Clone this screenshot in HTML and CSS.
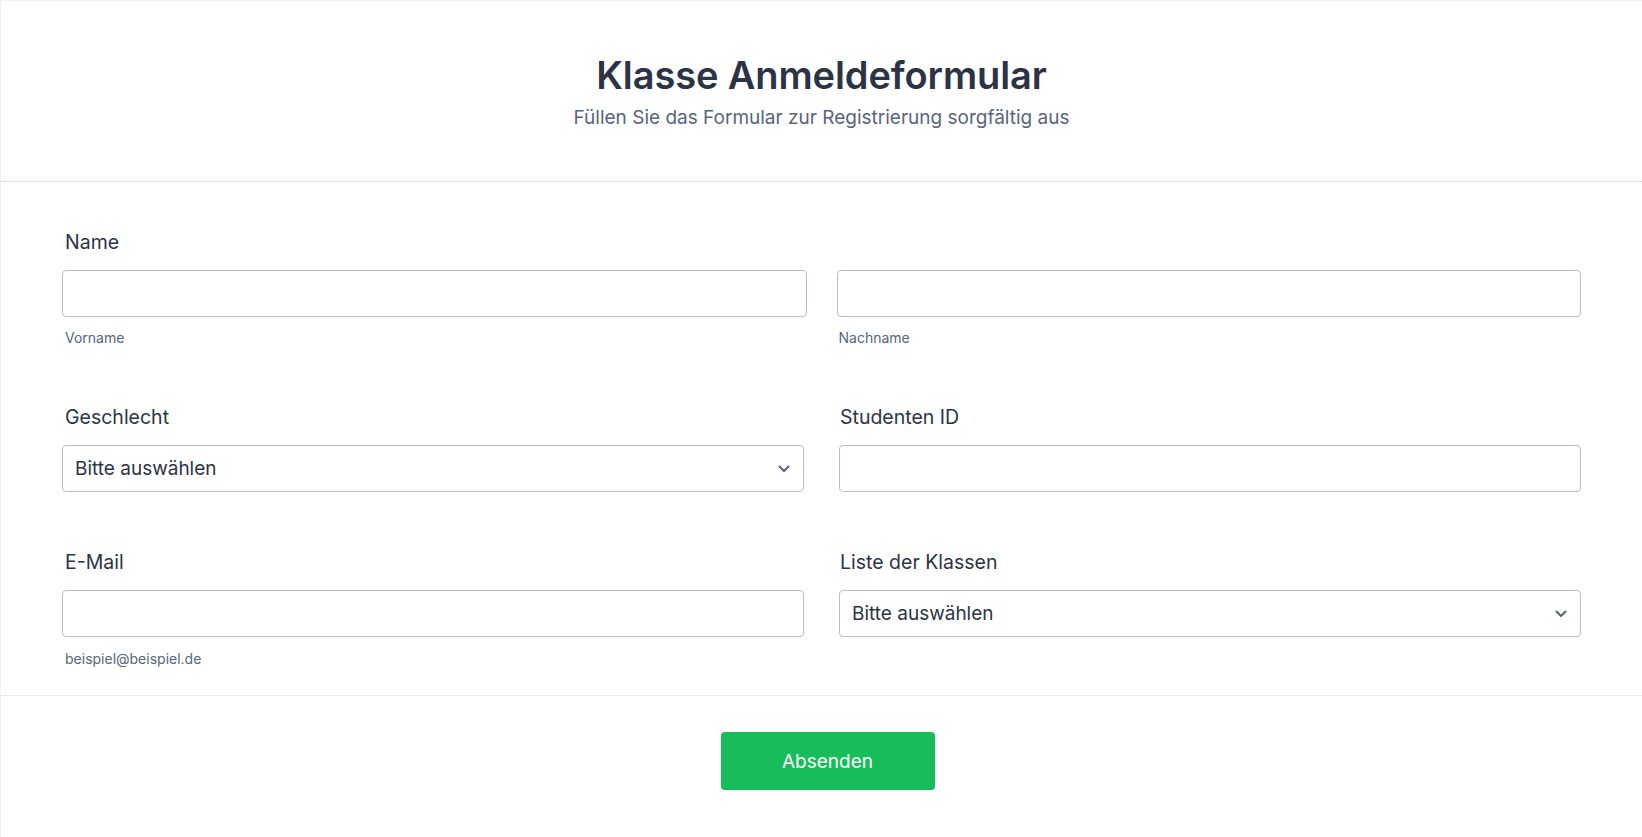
FILE: index.html
```html
<!DOCTYPE html>
<html lang="de">
<head>
<meta charset="utf-8">
<title>Klasse Anmeldeformular</title>
<link rel="stylesheet" href="styles.css">
</head>
<body>
<div class="form">
  <header class="form-header">
    <h1 class="form-title">Klasse Anmeldeformular</h1>
    <p class="form-subtitle">Füllen Sie das Formular zur Registrierung sorgfältig aus</p>
  </header>
  <section class="form-body">
    <div class="row row-name">
      <div class="label label-span">Name</div>
      <div class="field">
        <div class="input"></div>
        <div class="sublabel">Vorname</div>
      </div>
      <div class="field">
        <div class="input"></div>
        <div class="sublabel">Nachname</div>
      </div>
    </div>
    <div class="row row-pair">
      <div class="field">
        <div class="label">Geschlecht</div>
        <div class="input select">
          <span class="select-text">Bitte auswählen</span>
          <svg class="chev" width="12" height="8" viewBox="0 0 12 8"><path d="M1.5 1.5 L6 6 L10.5 1.5" fill="none" stroke="#57647e" stroke-width="2" stroke-linecap="round" stroke-linejoin="round"/></svg>
        </div>
      </div>
      <div class="field">
        <div class="label label-right">Studenten ID</div>
        <div class="input"></div>
      </div>
    </div>
    <div class="row row-pair">
      <div class="field">
        <div class="label">E-Mail</div>
        <div class="input"></div>
        <div class="sublabel sublabel-hint">beispiel@beispiel.de</div>
      </div>
      <div class="field">
        <div class="label label-right">Liste der Klassen</div>
        <div class="input select">
          <span class="select-text">Bitte auswählen</span>
          <svg class="chev" width="12" height="8" viewBox="0 0 12 8"><path d="M1.5 1.5 L6 6 L10.5 1.5" fill="none" stroke="#57647e" stroke-width="2" stroke-linecap="round" stroke-linejoin="round"/></svg>
        </div>
      </div>
    </div>
  </section>
  <footer class="form-footer">
    <button class="submit" type="button">Absenden</button>
  </footer>
</div>
</body>
</html>
```
FILE: styles.css
```css
* { box-sizing: border-box; }
html, body { margin: 0; padding: 0; background: #ffffff; }
body {
  font-family: Inter, "Noto Sans", "Liberation Sans", sans-serif;
  color: #2c3345;
}
.form {
  width: 1642px;
  height: 837px;
  border-top: 1px solid #eef0f5;
  border-left: 1px solid #eef0f5;
  overflow: hidden;
}
.form-header {
  text-align: center;
  padding: 52px 0 51px;
  border-bottom: 1px dotted #c9ccd8;
}
.form-title {
  margin: 0;
  font-size: 38px;
  line-height: 44px;
  font-weight: 600;
  color: #2c3345;
  letter-spacing: -0.1px;
}
.form-subtitle {
  margin: 9px 0 0;
  font-size: 19px;
  line-height: 24px;
  color: #57647e;
}
.form-body {
  padding: 48px 61px 27px 61px;
  border-bottom: 1px solid #eaebf2;
}
.row {
  display: grid;
  grid-template-columns: 1fr 1fr;
}
.row + .row { margin-top: 58px; }
.row-name { column-gap: 30px; }
.row-pair { column-gap: 35px; }
.label {
  font-size: 19.5px;
  line-height: 24px;
  font-weight: 400;
  color: #2c3345;
  padding-left: 3px;
  margin-bottom: 16px;
}
.label-right { padding-left: 1px; }
.label-span { grid-column: 1 / 3; margin-bottom: 16px; }
.input {
  height: 47px;
  border: 1px solid #b8bdc9;
  border-radius: 4px;
  background: #ffffff;
}
.select {
  display: flex;
  align-items: center;
  justify-content: space-between;
  padding: 0 12px 0 12px;
}
.select-text {
  font-size: 19px;
  color: #2c3345;
}
.chev { display: block; margin-right: 1px; }
.sublabel {
  margin-top: 12px;
  font-size: 14px;
  line-height: 18px;
  color: #57647e;
  padding-left: 3px;
}
.sublabel-hint { margin-top: 13px; }
.row-name .field + .field .sublabel { padding-left: 2px; }
.form-footer {
  display: flex;
  justify-content: center;
  padding: 36px 0 0 12px;
}
.submit {
  width: 214px;
  height: 58px;
  border: none;
  border-radius: 4px;
  background: #18bd5b;
  color: #ffffff;
  font-family: Inter, "Noto Sans", "Liberation Sans", sans-serif;
  font-size: 19px;
  font-weight: 400;
  cursor: pointer;
}
```
